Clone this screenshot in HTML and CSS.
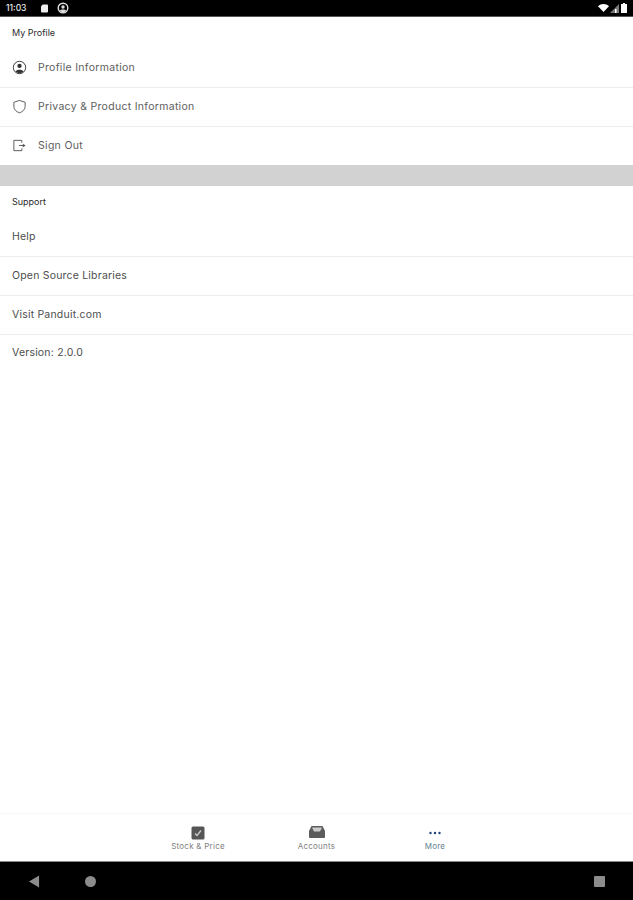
FILE: index.html
```html
<!DOCTYPE html>
<html lang="en">
<head>
<meta charset="utf-8">
<title>More</title>
<link rel="stylesheet" href="styles.css">
</head>
<body>
<div class="app">
  <header class="status">
    <span class="time">11:03</span>
    <svg class="st-icon sd" viewBox="0 0 8 9"><path d="M2 0h5a1 1 0 0 1 1 1v7a1 1 0 0 1-1 1H1a1 1 0 0 1-1-1V2z" fill="#eee"/></svg>
    <svg class="st-icon glob" viewBox="0 0 12 12"><circle cx="6" cy="6" r="4.8" fill="none" stroke="#ddd" stroke-width="1.4"/><circle cx="6" cy="5" r="1.7" fill="#ddd"/><path d="M2.8 8.8c1-1.6 5.400-1.600 6.400 0L6 11z" fill="#ddd"/></svg>
    <span class="st-space"></span>
    <svg class="st-icon wifi" viewBox="0 0 11 8"><path d="M0 2.200C3-.7 8-.7 11 2.200L5.500 8z" fill="#fff"/></svg>
    <svg class="st-icon cell" viewBox="0 0 9 9"><path d="M9 0v9H0z" fill="#777"/><path d="M5 5h1.500v4H5z" fill="#fff"/></svg>
    <svg class="st-icon batt" viewBox="0 0 6 10"><path d="M2 0h2v1h2v9H0V1h2z" fill="#fff"/></svg>
  </header>

  <main class="content">
    <section>
      <h2 class="sec-title">My Profile</h2>
      <a class="row">
        <svg class="row-icon" viewBox="0 0 16 16"><circle cx="8" cy="8" r="6.600" fill="none" stroke="#333" stroke-width="1"/><circle cx="8" cy="6.300" r="2.300" fill="#333"/><path d="M3.800 12.300c1-2.400 7.400-2.400 8.400 0A6 6 0 0 1 8 14a6 6 0 0 1-4.200-1.700z" fill="#333"/></svg>
        <span>Profile Information</span>
      </a>
      <a class="row">
        <svg class="row-icon" viewBox="0 0 16 16"><path d="M8 1.500l6 2v4.500c0 3.300-2.600 5.600-6 6.700-3.400-1.100-6-3.400-6-6.700V3.500z" fill="none" stroke="#555" stroke-width="1"/></svg>
        <span>Privacy &amp; Product Information</span>
      </a>
      <a class="row end">
        <svg class="row-icon" viewBox="0 0 16 16"><path d="M10.500 5V2.500H2v11h8.500V11" fill="none" stroke="#555" stroke-width="1"/><path d="M7.500 8H12" stroke="#555" stroke-width="1"/><path d="M11.500 6L14.500 8l-3 2z" fill="#555"/></svg>
        <span>Sign Out</span>
      </a>
    </section>
    <div class="band"></div>
    <section>
      <h2 class="sec-title">Support</h2>
      <a class="row plain"><span>Help</span></a>
      <a class="row plain"><span>Open Source Libraries</span></a>
      <a class="row plain"><span>Visit Panduit.com</span></a>
      <div class="row plain last"><span>Version: 2.0.0</span></div>
    </section>
  </main>

  <nav class="tabs">
    <a class="tab">
      <svg class="tab-icon" viewBox="0 0 14 14"><rect x="0.500" y="0.500" width="13" height="13" rx="1.500" fill="#555"/><path d="M4 7.500l2 2 4-5" fill="none" stroke="#ccc" stroke-width="1.300"/></svg>
      <span>Stock &amp; Price</span>
    </a>
    <a class="tab">
      <svg class="tab-icon wide" viewBox="0 0 16 12"><path d="M2.500 0h11L16 5v6a1 1 0 0 1-1 1H1a1 1 0 0 1-1-1V5z" fill="#5c5c5c"/><path d="M3 1.500h10L11 5.500H5z" fill="#ccc"/></svg>
      <span>Accounts</span>
    </a>
    <a class="tab active">
      <svg class="tab-icon" viewBox="0 0 14 14"><circle cx="2.500" cy="7" r="1.200" fill="#1d3f7a"/><circle cx="7" cy="7" r="1.200" fill="#1d3f7a"/><circle cx="11.500" cy="7" r="1.200" fill="#1d3f7a"/></svg>
      <span>More</span>
    </a>
  </nav>

  <footer class="sysnav">
    <svg class="sys back" viewBox="0 0 12 13"><path d="M11 0v13L0 6.500z" fill="#8c8c8c"/></svg>
    <span class="sys home"></span>
    <span class="sys recent"></span>
  </footer>
</div>
</body>
</html>
```

FILE: styles.css
```css
* { box-sizing: border-box; }
html, body { margin: 0; height: 100%; }
body {
  background: #fff;
  font-family: "Inter", "Liberation Sans", sans-serif;
  color: #4a4a4a;
}
.app { height: 900px; display: flex; flex-direction: column; }

.status {
  height: 17px;
  background: #000;
  border-bottom: 1px solid #555;
  color: #eee;
  display: flex;
  align-items: center;
  padding: 0 5px 0 6px;
  flex: none;
}
.time { font-size: 8.500px; font-weight: 500; width: 35px; }
.st-icon { display: block; flex: none; }
.sd { width: 7px; height: 9px; margin-right: 9px; }
.glob { width: 12px; height: 12px; }
.st-space { flex: 1; }
.wifi { width: 11px; height: 8px; margin-right: 1px; }
.cell { width: 9px; height: 9px; margin-right: 2px; }
.batt { width: 6px; height: 10px; margin-right: 1px; }

.content { flex: 1; }
.sec-title {
  margin: 0;
  height: 32px;
  padding: 10px 12px 0;
  font-size: 9px;
  line-height: 12px;
  font-weight: 400;
  color: #2a2a2a;
}
.row {
  height: 39px;
  display: flex;
  align-items: center;
  gap: 11px;
  padding: 0 12px 1px 12px;
  border-bottom: 1px solid #ececec;
  font-size: 10.500px;
  font-weight: 400;
  letter-spacing: 0.300px;
  color: #5e5e5e;
}
.row.end { height: 38px; border-bottom: 0; }
.row.plain { color: #4e4e4e; letter-spacing: 0.200px; }
.row.last { border-bottom: 0; padding-bottom: 5px; }
.row-icon { width: 15px; height: 15px; flex: none; }
.band { height: 21px; background: #d2d2d2; }

.tabs {
  height: 48px;
  flex: none;
  display: flex;
  justify-content: center;
  background: #fff;
  border-top: 1px solid #f8f8f8;
  padding-top: 12px;
}
.tab {
  width: 118.500px;
  display: flex;
  flex-direction: column;
  align-items: center;
  font-size: 8px;
  line-height: 11px;
  letter-spacing: 0.250px;
  color: #808080;
}
.tab-icon { width: 14px; height: 14px; display: block; margin-bottom: 1px; }
.tab-icon.wide { width: 16px; height: 12px; margin-bottom: 3px; }
.tab.active { color: #5f7f8f; }

.sysnav {
  height: 39px;
  flex: none;
  background: #000;
  border-top: 1px solid #888;
  display: flex;
  align-items: center;
  padding: 0 28px 0 29px;
}
.sys { display: block; flex: none; }
.back { width: 11px; height: 13px; margin-right: 45px; }
.home { width: 11px; height: 11px; border-radius: 50%; background: #8c8c8c; }
.recent { width: 11px; height: 11px; border-radius: 1px; background: #8c8c8c; margin-left: auto; }
```
